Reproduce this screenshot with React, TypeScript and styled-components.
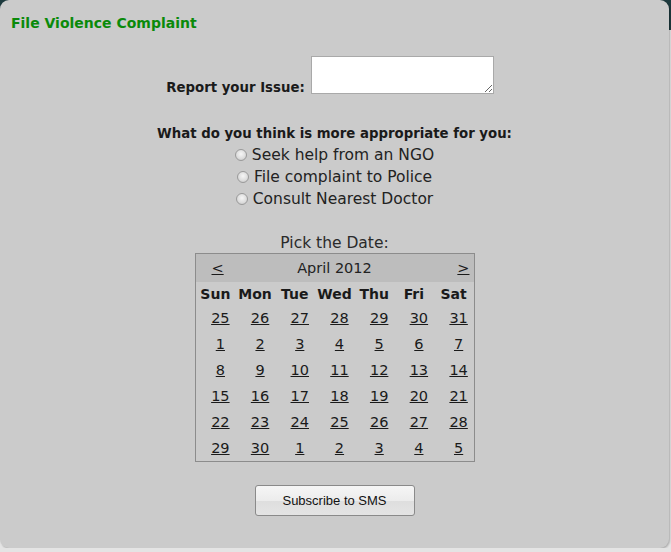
import React from "react";
import styled, { createGlobalStyle } from "styled-components";

const Global = createGlobalStyle`
  html { height: 100%; background: #e4e4e4 linear-gradient(#1d3a3e 0, #1d3a3e 30px, #e4e4e4 30px) no-repeat; }
  body {
    margin: 0;
    padding: 0;
    font-family: "DejaVu Sans", "Liberation Sans", sans-serif;
    color: #1a1a1a;
  }
`;

const Panel = styled.div`
  width: 669px;
  height: 548px;
  box-sizing: border-box;
  background: #cbcbcb;
  border-radius: 9px;
  box-shadow: 1px 1px 2px rgba(0, 0, 0, 0.25);
  padding: 15px 11px 0;
  display: flex;
  flex-direction: column;
  align-items: center;
`;

const Title = styled.h1`
  align-self: flex-start;
  margin: 0;
  font-size: 14px;
  font-weight: bold;
  color: #0a8a0a;
`;

const IssueRow = styled.div`
  margin-top: 25px;
  display: flex;
  align-items: flex-end;
  gap: 6px;
  margin-right: 9px;
`;

const Label = styled.label`
  font-weight: bold;
  font-size: 13.3px;
  margin-bottom: -1px;
`;

const Area = styled.textarea`
  width: 183px;
  height: 38px;
  box-sizing: border-box;
  border: 1px solid #a9a9a9;
  background: #fff;
  resize: both;
  margin: 0;
`;

const Question = styled.div`
  margin-top: 32px;
  font-weight: bold;
  font-size: 13.3px;
`;

const Options = styled.div`
  display: flex;
  flex-direction: column;
  align-items: center;
  margin-top: 3px;
`;

const Option = styled.label`
  display: flex;
  align-items: center;
  gap: 5px;
  height: 22px;
  font-size: 15.5px;
  color: #222;
`;

const Radio = styled.span`
  width: 12px;
  height: 12px;
  border-radius: 50%;
  box-sizing: border-box;
  border: 1px solid #9a9a9a;
  background: radial-gradient(circle at 50% 40%, #f6f6f6 0, #dedede 55%, #c2c2c2 100%);
`;

const PickLabel = styled.div`
  margin-top: 24px;
  font-size: 15.5px;
  color: #2a2a2a;
`;

const Calendar = styled.table`
  margin-top: 1px;
  border: 1px solid #8c8c8c;
  border-collapse: separate;
  border-spacing: 0;
  width: 280px;
  table-layout: fixed;
  font-size: 14.5px;
`;

const HeadRow = styled.tr`
  background: #bdbdbd;
  height: 28px;
`;

const NavCell = styled.td<{ $align: "left" | "right" }>`
  text-align: ${(p) => p.$align};
  padding: ${(p) => (p.$align === "left" ? "0 0 0 16px" : "0 4px 0 0")};
`;

const MonthCell = styled.td`
  text-align: center;
  color: #222;
`;

const DayHead = styled.th`
  font-weight: bold;
  font-size: 14px;
  height: 23px;
  padding: 0;
`;

const DayCell = styled.td`
  text-align: center;
  height: 26px;
  padding: 0 0 0 10px;
`;

const DayLink = styled.a`
  color: #1a1a1a;
  text-decoration: underline;
  cursor: pointer;
`;

const Button = styled.button`
  margin-top: 23px;
  width: 160px;
  height: 31px;
  border: 1px solid #8a8a8a;
  border-radius: 3px;
  background: linear-gradient(#f6f6f6 0, #ececec 50%, #dedede 50%, #e4e4e4 100%);
  font-family: "Liberation Sans", Arial, sans-serif;
  font-size: 13px;
  color: #111;
`;

const days = ["Sun", "Mon", "Tue", "Wed", "Thu", "Fri", "Sat"];
const weeks = [
  [25, 26, 27, 28, 29, 30, 31],
  [1, 2, 3, 4, 5, 6, 7],
  [8, 9, 10, 11, 12, 13, 14],
  [15, 16, 17, 18, 19, 20, 21],
  [22, 23, 24, 25, 26, 27, 28],
  [29, 30, 1, 2, 3, 4, 5],
];

export default function App() {
  return (
    <>
      <Global />
      <Panel>
        <Title>File Violence Complaint</Title>
        <IssueRow>
          <Label>Report your Issue:</Label>
          <Area />
        </IssueRow>
        <Question>What do you think is more appropriate for you:</Question>
        <Options>
          <Option><Radio />Seek help from an NGO</Option>
          <Option><Radio />File complaint to Police</Option>
          <Option><Radio />Consult Nearest Doctor</Option>
        </Options>
        <PickLabel>Pick the Date:</PickLabel>
        <Calendar>
          <tbody>
            <HeadRow>
              <NavCell $align="left"><DayLink>&lt;</DayLink></NavCell>
              <MonthCell colSpan={5}>April 2012</MonthCell>
              <NavCell $align="right"><DayLink>&gt;</DayLink></NavCell>
            </HeadRow>
            <tr>
              {days.map((d) => (
                <DayHead key={d}>{d}</DayHead>
              ))}
            </tr>
            {weeks.map((w, i) => (
              <tr key={i}>
                {w.map((n, j) => (
                  <DayCell key={j}>
                    <DayLink>{n}</DayLink>
                  </DayCell>
                ))}
              </tr>
            ))}
          </tbody>
        </Calendar>
        <Button>Subscribe to SMS</Button>
      </Panel>
    </>
  );
}
